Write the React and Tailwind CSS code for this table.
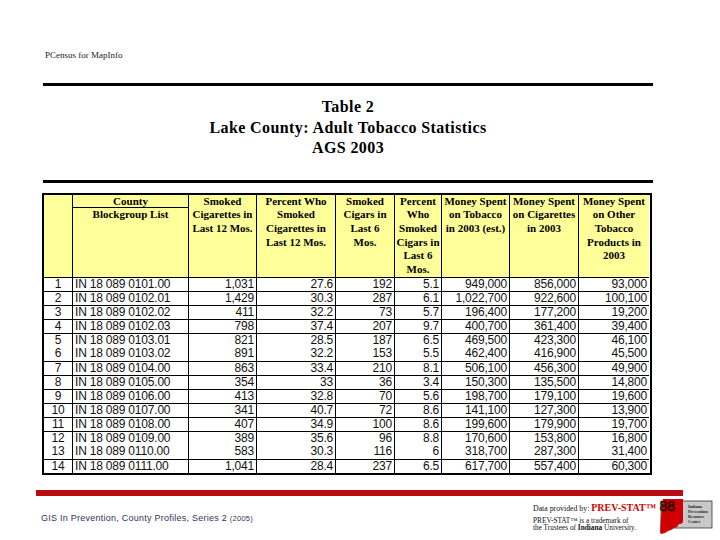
import React from 'react';

const rows = [
    ['1', 'IN 18 089 0101.00', '1,031', '27.6', '192', '5.1', '949,000', '856,000', '93,000'],
    ['2', 'IN 18 089 0102.01', '1,429', '30.3', '287', '6.1', '1,022,700', '922,600', '100,100'],
    ['3', 'IN 18 089 0102.02', '411', '32.2', '73', '5.7', '196,400', '177,200', '19,200'],
    ['4', 'IN 18 089 0102.03', '798', '37.4', '207', '9.7', '400,700', '361,400', '39,400'],
    ['5', 'IN 18 089 0103.01', '821', '28.5', '187', '6.5', '469,500', '423,300', '46,100'],
    ['6', 'IN 18 089 0103.02', '891', '32.2', '153', '5.5', '462,400', '416,900', '45,500'],
    ['7', 'IN 18 089 0104.00', '863', '33.4', '210', '8.1', '506,100', '456,300', '49,900'],
    ['8', 'IN 18 089 0105.00', '354', '33', '36', '3.4', '150,300', '135,500', '14,800'],
    ['9', 'IN 18 089 0106.00', '413', '32.8', '70', '5.6', '198,700', '179,100', '19,600'],
    ['10', 'IN 18 089 0107.00', '341', '40.7', '72', '8.6', '141,100', '127,300', '13,900'],
    ['11', 'IN 18 089 0108.00', '407', '34.9', '100', '8.6', '199,600', '179,900', '19,700'],
    ['12', 'IN 18 089 0109.00', '389', '35.6', '96', '8.8', '170,600', '153,800', '16,800'],
    ['13', 'IN 18 089 0110.00', '583', '30.3', '116', '6', '318,700', '287,300', '31,400'],
    ['14', 'IN 18 089 0111.00', '1,041', '28.4', '237', '6.5', '617,700', '557,400', '60,300'],
];

// lines between these rows vanish in the scanned original
const noTopLine = ['6', '13'];

const headers = [
    ['Smoked', 'Cigarettes in', 'Last 12 Mos.'],
    ['Percent Who', 'Smoked', 'Cigarettes in', 'Last 12 Mos.'],
    ['Smoked', 'Cigars in', 'Last 6', 'Mos.'],
    ['Percent', 'Who', 'Smoked', 'Cigars in', 'Last 6', 'Mos.'],
    ['Money Spent', 'on Tobacco', 'in 2003 (est.)'],
    ['Money Spent', 'on Cigarettes', 'in 2003'],
    ['Money Spent', 'on Other', 'Tobacco', 'Products in', '2003'],
];

const HeadCell = ({ lines, last }) => (
    <div className={`h-[82px] bg-[#ffff99] border-black text-center ${last ? '' : 'border-r'}`}>
        {lines.map((l) => (
            <div key={l} className="whitespace-nowrap">{l}</div>
        ))}
    </div>
);

const IndianaLogo = () => (
    <svg width="58" height="40" viewBox="0 0 58 40">
        <rect x="5" y="4" width="51" height="27" fill="#c8c8c8" stroke="#333" strokeWidth="0.8" />
        <polygon
            points="7,2 27,2 27,25 25,27 23,27 21,30 18,31 15,33 12,34 9,36 5,37 4,35 5,20"
            fill="#d00000"
        />
        <text x="3.5" y="14" fontSize="14" fontFamily="'Liberation Sans', sans-serif" fill="none" stroke="#000" strokeWidth="0.7">88</text>
        <text fontSize="4.2" fontWeight="bold" fontFamily="'Liberation Serif', serif" fill="#222">
            <tspan x="32" y="11">Indiana</tspan>
            <tspan x="32" y="16">Prevention</tspan>
            <tspan x="32" y="21">Resource</tspan>
            <tspan x="32" y="26">Center</tspan>
        </text>
    </svg>
);

const App = () => {
    const grid = 'grid grid-cols-[29px_116px_68px_79px_59px_47px_68px_69px_70px]';

    return (
        <div className="w-[720px] h-[540px] overflow-hidden bg-white text-black font-['Liberation_Serif',serif]">
            <div className="pt-[50px] pl-[45px] text-[9px] leading-[11px] text-[#222]">PCensus for MapInfo</div>

            <div className="mt-[22px] ml-[43px] w-[610px] h-[3px] bg-black"></div>

            <div className="mt-[11px] ml-[43px] w-[610px] text-center font-bold text-[16px] leading-[20.5px] tracking-[0.4px]">
                <div>Table 2</div>
                <div>Lake County: Adult Tobacco Statistics</div>
                <div>AGS 2003</div>
            </div>

            <div className="mt-[21px] ml-[43px] w-[610px] h-[3px] bg-black"></div>

            {/* table */}
            <div className={`mt-[10px] ml-[42px] w-[610px] border-2 border-black ${grid}`}>
                <div className="h-[82px] bg-[#ffff99] border-r border-black"></div>
                <div className="h-[82px] bg-[#ffff99] border-r border-black text-center font-bold text-[11px] leading-[13.7px]">
                    <div className="h-[13px] border-b border-black leading-[13px]">County</div>
                    <div>Blockgroup List</div>
                </div>
                {headers.map((lines, i) => (
                    <div key={i} className="font-bold text-[11px] leading-[13.7px]">
                        <HeadCell lines={lines} last={i === headers.length - 1} />
                    </div>
                ))}

                {rows.map((r) =>
                    r.map((v, j) => (
                        <div
                            key={r[0] + '-' + j}
                            className={`h-[14px] border-black font-['Liberation_Sans',sans-serif] text-[12px] leading-[13px] tracking-[-0.2px] text-[#111] whitespace-nowrap ${
                                noTopLine.includes(r[0]) ? '' : 'border-t'
                            } ${j === 8 ? '' : 'border-r'} ${
                                j === 0 ? 'text-center' : j === 1 ? 'text-left pl-[2px]' : 'text-right pr-[2px]'
                            }`}
                        >
                            {v}
                        </div>
                    ))
                )}
            </div>

            <div className="mt-[15px] ml-[36px] w-[647px] h-[6px] bg-[#b80c10]"></div>

            <div className="flex items-start">
                <div className="w-[533px] pl-[41px] pt-[17px] font-['Liberation_Sans',sans-serif] text-[9px] leading-[11px] tracking-[0.25px] text-[#333355]">
                    GIS In Prevention, County Profiles, Series 2 <span className="text-[7.5px]">(2005)</span>
                </div>
                <div className="w-[123px] pt-[6px] text-[#111]">
                    <div className="text-[7.8px] leading-[11px] whitespace-nowrap">
                        Data provided by: <span className="text-[10px] font-bold text-[#d40000]">PREV-STAT™</span>
                    </div>
                    <div className="mt-[3px] text-[7.3px] leading-[7.5px] whitespace-nowrap">
                        <div>PREV-STAT™ is a trademark of</div>
                        <div>
                            the Trustees of <span className="font-bold">Indiana</span> University.
                        </div>
                    </div>
                </div>
                <div className="mt-[1px]">
                    <IndianaLogo />
                </div>
            </div>
        </div>
    );
};

export default App;
